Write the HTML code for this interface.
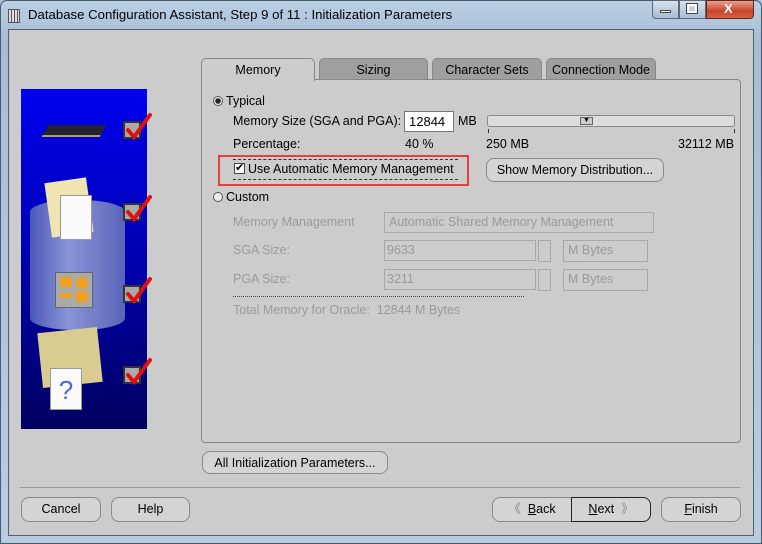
<!DOCTYPE html>
<html><head><meta charset="utf-8"><style>
*{box-sizing:border-box;margin:0;padding:0}
body{width:762px;height:544px;overflow:hidden;background:#a9c1d9;font-family:"Liberation Sans","DejaVu Sans",sans-serif;font-size:12.5px;color:#000;position:relative}
.a{position:absolute}
.frame{left:0;top:0;width:762px;height:544px;background:linear-gradient(#bcd0e4,#a7bdd4 40px,#b8cde2);border:1px solid #4a5a6a;border-radius:7px 7px 0 0}
.inner{left:8px;top:29px;width:746px;height:507px;background:#cccccc;border:1px solid #55606b}
.t{white-space:nowrap}
.btn{border:1px solid #8a8a8a;border-radius:8px;background:#d4d4d4;text-align:center;line-height:22px;font-size:12.5px}
.tab{top:58px;height:22px;border:1px solid #888;border-bottom:none;border-radius:5px 5px 0 0;background:#9f9f9f;text-align:center;line-height:22px;font-size:12.5px}
.gray{color:#9a9a9a}
.dis{border:1px solid #a8a8a8;background:#cccccc}
</style></head><body>
<div class="a frame"></div>
<div class="a" style="left:8px;top:9px;width:12px;height:14px;border:1px solid #555;background:repeating-linear-gradient(90deg,#ddd 0 2px,#556 2px 3px)"></div>
<div class="a t" style="left:28px;top:7px;font-size:13.2px">Database Configuration Assistant, Step 9 of 11 : Initialization Parameters</div>
<div class="a" style="left:652px;top:0;width:27px;height:19px;border:1px solid #5a6a7a;border-radius:0 0 0 4px;background:linear-gradient(#d6e2ee,#a8bcd0)"></div>
<div class="a" style="left:660px;top:10px;width:11px;height:3px;background:#fff;border:1px solid #444"></div>
<div class="a" style="left:679px;top:0;width:27px;height:19px;border:1px solid #5a6a7a;background:linear-gradient(#d6e2ee,#a8bcd0)"></div>
<div class="a" style="left:687px;top:4px;width:10px;height:9px;border:2px solid #fff;outline:1px solid #444"></div>
<div class="a" style="left:706px;top:0;width:48px;height:19px;border:1px solid #5a2a20;border-radius:0 0 4px 0;background:linear-gradient(#e8a090,#c8442a 60%,#d86040)"></div>
<div class="a" style="left:724px;top:1px;color:#fff;font-weight:bold;font-size:13px">X</div>
<div class="a inner"></div>

<div class="a" style="left:21px;top:89px;width:126px;height:340px;background:linear-gradient(#0000f0,#0000b0 50%,#000060)"></div>
<div class="a" style="left:30px;top:200px;width:95px;height:130px;border-radius:45px/12px;background:linear-gradient(90deg,#4a58b8,#8a94d8 40%,#5a64b8)"></div>
<div class="a" style="left:45px;top:125px;width:58px;height:12px;background:#223;transform:skewX(-30deg);border-bottom:2px solid #b9a040"></div>
<div class="a" style="left:48px;top:180px;width:42px;height:55px;background:#f0e4b0;transform:rotate(-8deg)"></div>
<div class="a" style="left:60px;top:195px;width:32px;height:45px;background:#fafafa;border:1px solid #999"></div>
<div class="a" style="left:55px;top:272px;width:38px;height:36px;background:#aaa;border:1px solid #666"></div>
<div class="a" style="left:60px;top:277px;width:12px;height:10px;background:#f0a020"></div>
<div class="a" style="left:76px;top:277px;width:12px;height:12px;border-radius:50%;background:#f0a020"></div>
<div class="a" style="left:60px;top:293px;width:12px;height:5px;background:#f0a020"></div>
<div class="a" style="left:76px;top:291px;width:12px;height:11px;background:#f0a020"></div>
<div class="a" style="left:40px;top:330px;width:60px;height:55px;background:#d8cc90;transform:rotate(-6deg)"></div>
<div class="a" style="left:50px;top:368px;width:32px;height:42px;background:#fafafa;border:1px solid #999;color:#5060e0;font-size:26px;text-align:center;line-height:42px">?</div>
<svg class="a" style="left:120px;top:110px" width="36" height="290">
<g fill="#aaa" stroke="#333" stroke-width="2"><rect x="4" y="12" width="16" height="16"/><rect x="4" y="94" width="16" height="16"/><rect x="4" y="176" width="16" height="16"/><rect x="4" y="257" width="16" height="16"/></g>
<g fill="none" stroke="#e01010" stroke-width="4" stroke-linecap="round"><path d="M8 20l6 7 16-22"/><path d="M8 102l6 7 16-22"/><path d="M8 184l6 7 16-22"/><path d="M8 265l6 7 16-22"/></g></svg>

<div class="a tab" style="left:201px;width:114px;background:#cccccc;height:23px;z-index:2">Memory</div>
<div class="a tab" style="left:319px;width:109px">Sizing</div>
<div class="a tab" style="left:432px;width:110px">Character Sets</div>
<div class="a tab" style="left:546px;width:110px">Connection Mode</div>
<div class="a" style="left:201px;top:79px;width:540px;height:364px;border:1px solid #888;border-radius:0 4px 4px 4px"></div>

<div class="a" style="left:213px;top:96px;width:10px;height:10px;border-radius:50%;border:1px solid #555;background:radial-gradient(#222 2.5px,#eee 3px)"></div>
<div class="a t" style="left:226px;top:94px">Typical</div>
<div class="a t" style="left:233px;top:114px">Memory Size (SGA and PGA):</div>
<div class="a t" style="left:404px;top:111px;width:50px;height:21px;background:#fff;border:1px solid #777;padding:2px 0 0 4px;font-size:13px">12844</div>
<div class="a t" style="left:458px;top:114px">MB</div>
<div class="a" style="left:487px;top:115px;width:248px;height:12px;border:1px solid #888;border-radius:3px;background:#ddd"></div>
<div class="a" style="left:580px;top:117px;width:13px;height:8px;border:1px solid #666;background:#ccc;font-size:7px;line-height:6px;text-align:center">▼</div>
<div class="a" style="left:488px;top:129px;width:1px;height:4px;background:#333"></div>
<div class="a" style="left:734px;top:129px;width:1px;height:4px;background:#333"></div>
<div class="a t" style="left:233px;top:137px">Percentage:</div>
<div class="a t" style="left:405px;top:137px">40 %</div>
<div class="a t" style="left:486px;top:137px">250 MB</div>
<div class="a t" style="left:678px;top:137px">32112 MB</div>

<div class="a" style="left:218px;top:155px;width:251px;height:31px;border:2px solid #e04040"></div>
<div class="a" style="left:233px;top:159px;width:225px;height:21px;border-top:1px dashed #333;border-bottom:1px dashed #333"></div>
<div class="a" style="left:234px;top:163px;width:11px;height:11px;border:1px solid #444;background:#fff;font-size:11px;line-height:9px;text-align:center;font-weight:bold">✔</div>
<div class="a t" style="left:248px;top:162px">Use Automatic Memory Management</div>
<div class="a btn t" style="left:486px;top:158px;width:178px;height:24px">Show Memory Distribution...</div>

<div class="a" style="left:213px;top:192px;width:10px;height:10px;border-radius:50%;border:1px solid #555;background:#eee"></div>
<div class="a t" style="left:226px;top:190px">Custom</div>

<div class="a t gray" style="left:233px;top:215px">Memory Management</div>
<div class="a t gray dis" style="left:384px;top:212px;width:270px;height:21px;padding:2px 4px">Automatic Shared Memory Management</div>
<div class="a t gray" style="left:233px;top:243px">SGA Size:</div>
<div class="a t gray dis" style="left:384px;top:240px;width:152px;height:21px;padding:2px 2px">9633</div>
<div class="a dis" style="left:538px;top:240px;width:13px;height:22px"></div>
<div class="a t gray dis" style="left:563px;top:240px;width:85px;height:22px;padding:2px 4px">M Bytes</div>
<div class="a t gray" style="left:233px;top:272px">PGA Size:</div>
<div class="a t gray dis" style="left:384px;top:269px;width:152px;height:21px;padding:2px 2px">3211</div>
<div class="a dis" style="left:538px;top:269px;width:13px;height:22px"></div>
<div class="a t gray dis" style="left:563px;top:269px;width:85px;height:22px;padding:2px 4px">M Bytes</div>
<div class="a" style="left:233px;top:296px;width:291px;border-top:1px dotted #444"></div>
<div class="a t gray" style="left:233px;top:303px">Total Memory for Oracle:&nbsp; 12844 M Bytes</div>

<div class="a btn t" style="left:202px;top:451px;width:186px;height:23px">All Initialization Parameters...</div>
<div class="a" style="left:20px;top:487px;width:720px;height:1px;background:#999"></div>
<div class="a btn" style="left:21px;top:497px;width:80px;height:25px">Cancel</div>
<div class="a btn" style="left:111px;top:497px;width:79px;height:25px">Help</div>
<div class="a btn" style="left:492px;top:497px;width:80px;height:25px;border-radius:8px 0 0 8px;color:#000"><span style="color:#888">《</span>&nbsp; <u>B</u>ack</div>
<div class="a btn" style="left:571px;top:497px;width:80px;height:25px;border:1px solid #222;border-radius:0 8px 8px 0"><u>N</u>ext &nbsp;<span style="color:#888">》</span></div>
<div class="a btn" style="left:661px;top:497px;width:80px;height:25px"><u>F</u>inish</div>
</body></html>
